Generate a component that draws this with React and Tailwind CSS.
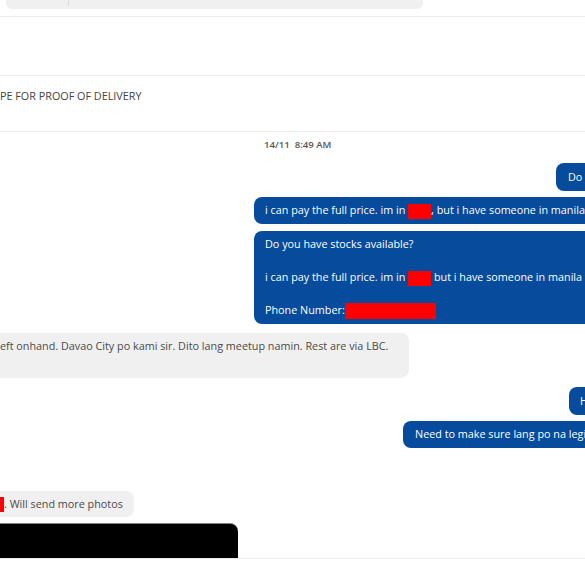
import React from "react";

const BLUE = "bg-[#064b9c]";

const Redact = ({ w, h = "h-[15px]" }) => (
  <span className={`inline-block align-middle bg-[#ff0000] ${w} ${h}`} />
);

const App = () => {
  return (
    <div className="w-[585px] h-[585px] overflow-hidden bg-white font-['Open_Sans',sans-serif] text-[10.8px] text-[#444]">
      {/* top product rows */}
      <div className="h-[17px] border-b border-[#ececec]">
        <div className="ml-[6px] w-[417px] h-[9px] bg-[#f0f0f0] rounded-b-md flex">
          <div className="ml-[62px] w-px h-[6px] bg-[#dcdcdc]" />
        </div>
      </div>
      <div className="h-[59px] border-b border-[#ececec]" />
      <div className="h-[56px] border-b border-[#ececec] pt-[11px] leading-[17px] whitespace-nowrap">
        PE FOR PROOF OF DELIVERY
      </div>

      {/* conversation */}
      <div className="flex flex-col items-start leading-[16.5px] whitespace-pre">
        <div className="ml-[264px] mt-[5.5px] leading-[14px] text-[9.6px] font-semibold text-[#555]">
          14/11  8:49 AM
        </div>

        <div className={`ml-[556px] mt-[11.5px] w-max px-[12px] py-[5.5px] rounded-lg text-white ${BLUE}`}>
          Do you have stocks available?
        </div>

        <div className={`ml-[254px] mt-[6px] w-max px-[11px] py-[5.5px] rounded-lg text-white ${BLUE}`}>
          i can pay the full price. im in <Redact w="w-[23px]" />, but i have someone in manila who can pick it up
        </div>

        <div className={`ml-[254px] mt-[7px] w-max px-[11px] py-[5px] rounded-lg text-white ${BLUE}`}>
          <div>Do you have stocks available?</div>
          <div> </div>
          <div>
            i can pay the full price. im in <Redact w="w-[23px]" /> but i have someone in manila who can pick it up
          </div>
          <div> </div>
          <div>
            Phone Number:<Redact w="w-[91px]" h="h-[16px]" />
          </div>
        </div>

        <div className="-ml-[12px] mt-[9px] w-[421px] pl-[12px] pt-[5px] pb-[7px] rounded-lg bg-[#f0f0f0] text-[#4a4a4a]">
          <div>eft onhand. Davao City po kami sir. Dito lang meetup namin. Rest are via LBC.</div>
          <div> </div>
        </div>

        <div className={`ml-[569px] mt-[9px] w-max px-[11px] py-[5.5px] rounded-lg text-white ${BLUE}`}>
          Hello po
        </div>

        <div className={`ml-[403px] mt-[6px] w-max px-[12px] py-[5.5px] rounded-lg text-white ${BLUE}`}>
          Need to make sure lang po na legit
        </div>

        <div className="mt-[42.5px] w-max pr-[11px] py-[5px] rounded-r-lg bg-[#f0f0f0] text-[#4a4a4a] flex items-center">
          <Redact w="w-[4px]" />
          <span>. Will send more photos</span>
        </div>

        <div className="mt-[6px] w-[238px] h-[35px] bg-black rounded-tr-lg border-t border-[#808080]" />
      </div>
      <div className="border-t border-[#ececec]" />
    </div>
  );
};

export default App;
